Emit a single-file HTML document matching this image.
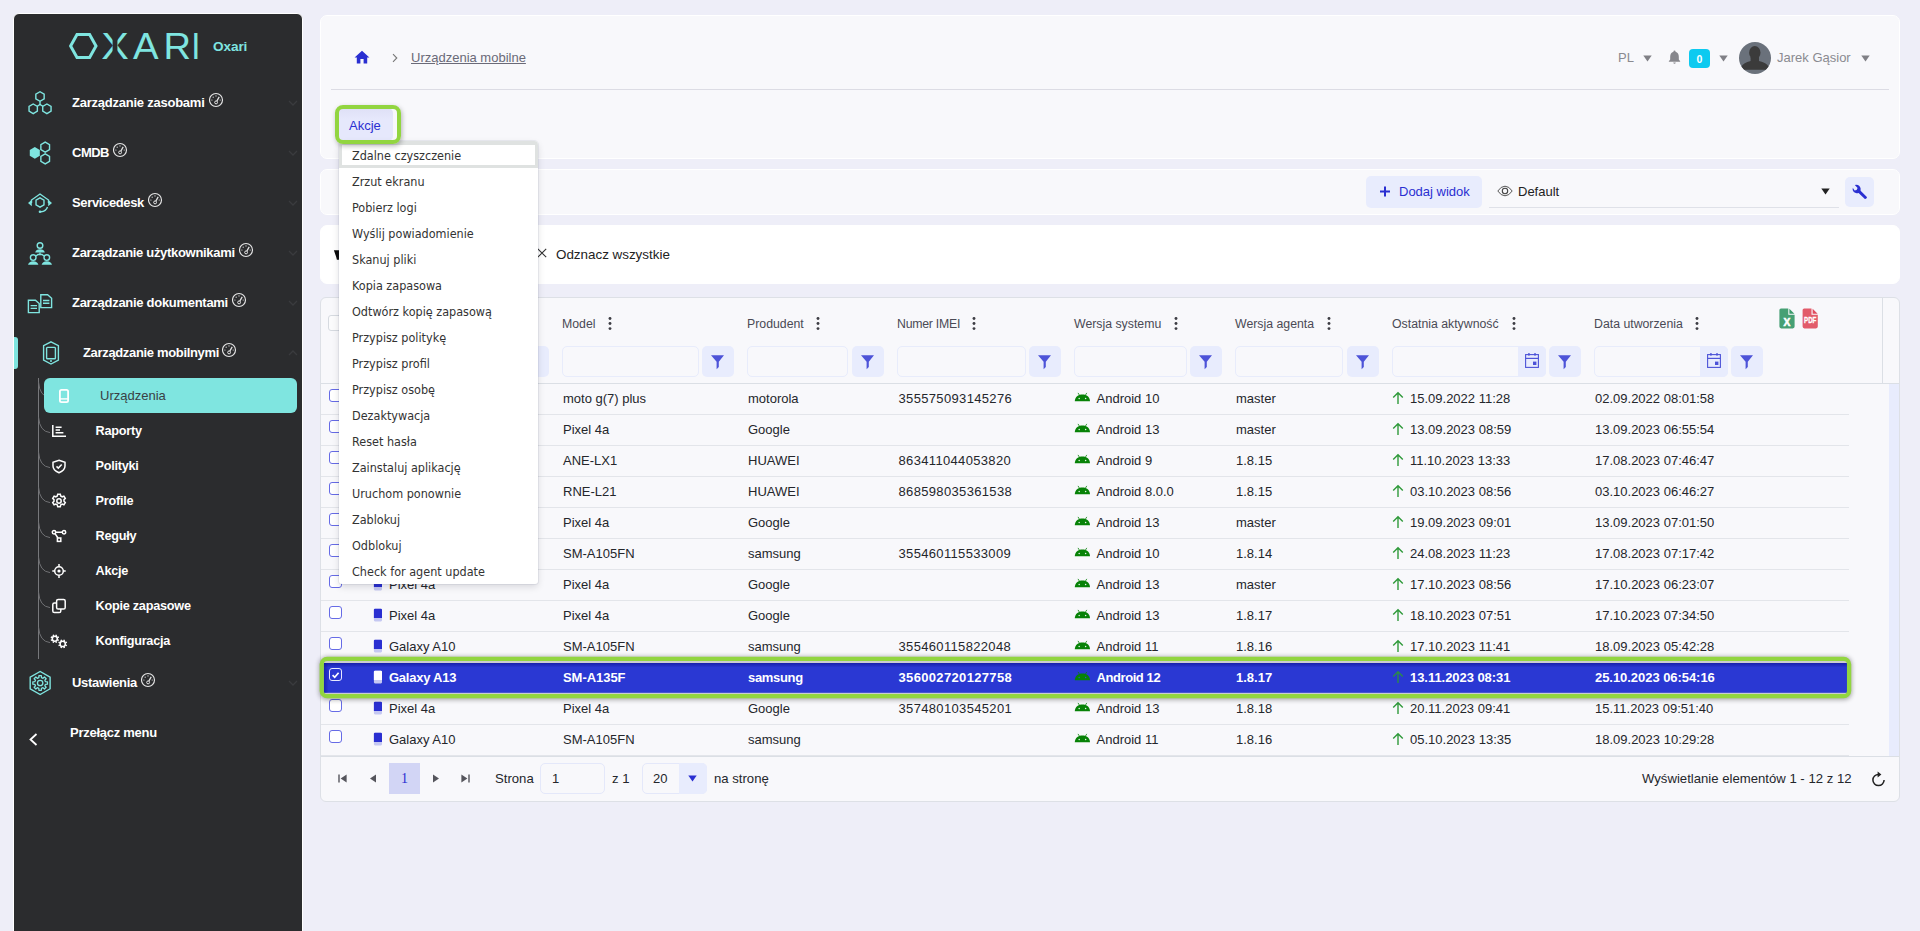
<!DOCTYPE html>
<html lang="pl"><head><meta charset="utf-8"><title>Urządzenia mobilne</title>
<style>
*{box-sizing:border-box;margin:0;padding:0}
html,body{width:1920px;height:931px;overflow:hidden}
body{background:#eeeef8;font-family:"Liberation Sans",Arial,sans-serif;font-size:13px;color:#2b2b33;position:relative}
.abs{position:absolute}
.t{position:absolute;white-space:nowrap;line-height:16px;margin-top:1px}
#side{position:absolute;left:13px;top:13px;width:290px;height:920px;background:#2b2c2e;border:1px solid #fff;border-radius:6px 6px 0 0}
.mi{margin-top:1px;position:absolute;white-space:nowrap;color:#fff;font-weight:700;font-size:13px;letter-spacing:-0.25px;line-height:16px}
.panel{position:absolute;left:320px;width:1580px;background:#f8f8fb;border-radius:7px;border:1px solid #fff}
.hdr{margin-top:1px;position:absolute;white-space:nowrap;font-size:12.3px;color:#4a4a55;line-height:14px;top:316px}
.fin{position:absolute;top:346px;height:31px;border:1px solid #e8ecfb;border-radius:5px;background:#f8f8fb}
.fbtn{position:absolute;top:346px;width:32px;height:31px;border-radius:5px;background:#e8ecfd}
.row{position:absolute;left:321px;width:1528px;height:31px;border-bottom:1px solid #e3e5ea}
.c{position:absolute;white-space:nowrap;font-size:13px;line-height:16px;top:7px;color:#24262b}
.cb{position:absolute;left:8px;top:5px;width:13px;height:13px;border:1px solid #666be6;border-radius:3px;background:#fff}
.dd{position:absolute;white-space:nowrap;left:352px;font-family:"DejaVu Sans Condensed","DejaVu Sans","Liberation Sans",sans-serif;font-size:12.5px;line-height:16px;color:#333;margin-top:1px}
</style></head>
<body>
<div id="side"></div>
<svg class="abs" style="left:66px;top:30px" width="140" height="32" viewBox="66 30 140 32" aria-label="OXARI">
<polygon points="70.6,46 77,34.5 89.6,34.5 96,46 89.6,57.5 77,57.5" fill="none" stroke="#7fe5e0" stroke-width="3"/>
<text y="59.3" font-family="Liberation Sans, Arial, sans-serif" font-size="36.6" fill="#7fe5e0"><tspan x="101.2" textLength="27.6" lengthAdjust="spacingAndGlyphs">X</tspan><tspan x="132.9" textLength="25.6" lengthAdjust="spacingAndGlyphs">A</tspan><tspan x="163.6" textLength="27.5" lengthAdjust="spacingAndGlyphs">R</tspan><tspan x="191.2" textLength="9.2" lengthAdjust="spacingAndGlyphs">I</tspan></text>
<rect x="112.6" y="32" width="4.8" height="28" fill="#2b2c2e"/>
</svg>
<div class="t" style="left:213px;top:38px;font-size:13.6px;font-weight:700;color:#7fe5e0;letter-spacing:-0.1px">Oxari</div>
<div class="mi" style="left:72px;top:94px;letter-spacing:-0.235px">Zarządzanie zasobami</div>
<svg class="abs" style="left:208.5px;top:92px" width="16" height="16" viewBox="0.7 0 16 16"><circle cx="7.7" cy="8" r="6.5" fill="none" stroke="#e6e6e6" stroke-width="1.15"/><circle cx="7.8" cy="10.4" r="1.45" fill="none" stroke="#e6e6e6" stroke-width="1"/><path d="M8.5 9.1 L10.9 4.9" stroke="#e6e6e6" stroke-width="1.25" fill="none"/><circle cx="3.6" cy="8" r=".6" fill="#e6e6e6"/><circle cx="4.9" cy="5.2" r=".6" fill="#e6e6e6"/><circle cx="7.7" cy="3.9" r=".6" fill="#e6e6e6"/><circle cx="11.9" cy="8" r=".6" fill="#e6e6e6"/></svg>
<svg class="abs" style="left:288px;top:100px" width="10" height="6" viewBox="0 0 10 6"><path d="M1 1 L5 5 L9 1" fill="none" stroke="#3a3b3e" stroke-width="1.3"/></svg>
<div class="mi" style="left:72px;top:144px;letter-spacing:-0.5px">CMDB</div>
<svg class="abs" style="left:112.5px;top:142px" width="16" height="16" viewBox="0.7 0 16 16"><circle cx="7.7" cy="8" r="6.5" fill="none" stroke="#e6e6e6" stroke-width="1.15"/><circle cx="7.8" cy="10.4" r="1.45" fill="none" stroke="#e6e6e6" stroke-width="1"/><path d="M8.5 9.1 L10.9 4.9" stroke="#e6e6e6" stroke-width="1.25" fill="none"/><circle cx="3.6" cy="8" r=".6" fill="#e6e6e6"/><circle cx="4.9" cy="5.2" r=".6" fill="#e6e6e6"/><circle cx="7.7" cy="3.9" r=".6" fill="#e6e6e6"/><circle cx="11.9" cy="8" r=".6" fill="#e6e6e6"/></svg>
<svg class="abs" style="left:288px;top:150px" width="10" height="6" viewBox="0 0 10 6"><path d="M1 1 L5 5 L9 1" fill="none" stroke="#3a3b3e" stroke-width="1.3"/></svg>
<div class="mi" style="left:72px;top:194px;letter-spacing:-0.355px">Servicedesk</div>
<svg class="abs" style="left:148px;top:192px" width="16" height="16" viewBox="0.7 0 16 16"><circle cx="7.7" cy="8" r="6.5" fill="none" stroke="#e6e6e6" stroke-width="1.15"/><circle cx="7.8" cy="10.4" r="1.45" fill="none" stroke="#e6e6e6" stroke-width="1"/><path d="M8.5 9.1 L10.9 4.9" stroke="#e6e6e6" stroke-width="1.25" fill="none"/><circle cx="3.6" cy="8" r=".6" fill="#e6e6e6"/><circle cx="4.9" cy="5.2" r=".6" fill="#e6e6e6"/><circle cx="7.7" cy="3.9" r=".6" fill="#e6e6e6"/><circle cx="11.9" cy="8" r=".6" fill="#e6e6e6"/></svg>
<svg class="abs" style="left:288px;top:200px" width="10" height="6" viewBox="0 0 10 6"><path d="M1 1 L5 5 L9 1" fill="none" stroke="#3a3b3e" stroke-width="1.3"/></svg>
<div class="mi" style="left:72px;top:244px;letter-spacing:-0.312px">Zarządzanie użytkownikami</div>
<svg class="abs" style="left:238.5px;top:242px" width="16" height="16" viewBox="0.7 0 16 16"><circle cx="7.7" cy="8" r="6.5" fill="none" stroke="#e6e6e6" stroke-width="1.15"/><circle cx="7.8" cy="10.4" r="1.45" fill="none" stroke="#e6e6e6" stroke-width="1"/><path d="M8.5 9.1 L10.9 4.9" stroke="#e6e6e6" stroke-width="1.25" fill="none"/><circle cx="3.6" cy="8" r=".6" fill="#e6e6e6"/><circle cx="4.9" cy="5.2" r=".6" fill="#e6e6e6"/><circle cx="7.7" cy="3.9" r=".6" fill="#e6e6e6"/><circle cx="11.9" cy="8" r=".6" fill="#e6e6e6"/></svg>
<svg class="abs" style="left:288px;top:250px" width="10" height="6" viewBox="0 0 10 6"><path d="M1 1 L5 5 L9 1" fill="none" stroke="#3a3b3e" stroke-width="1.3"/></svg>
<div class="mi" style="left:72px;top:294px;letter-spacing:-0.287px">Zarządzanie dokumentami</div>
<svg class="abs" style="left:232px;top:292px" width="16" height="16" viewBox="0.7 0 16 16"><circle cx="7.7" cy="8" r="6.5" fill="none" stroke="#e6e6e6" stroke-width="1.15"/><circle cx="7.8" cy="10.4" r="1.45" fill="none" stroke="#e6e6e6" stroke-width="1"/><path d="M8.5 9.1 L10.9 4.9" stroke="#e6e6e6" stroke-width="1.25" fill="none"/><circle cx="3.6" cy="8" r=".6" fill="#e6e6e6"/><circle cx="4.9" cy="5.2" r=".6" fill="#e6e6e6"/><circle cx="7.7" cy="3.9" r=".6" fill="#e6e6e6"/><circle cx="11.9" cy="8" r=".6" fill="#e6e6e6"/></svg>
<svg class="abs" style="left:288px;top:300px" width="10" height="6" viewBox="0 0 10 6"><path d="M1 1 L5 5 L9 1" fill="none" stroke="#3a3b3e" stroke-width="1.3"/></svg>
<div class="mi" style="left:83px;top:344px;letter-spacing:-0.338px">Zarządzanie mobilnymi</div>
<svg class="abs" style="left:222px;top:342px" width="16" height="16" viewBox="0.7 0 16 16"><circle cx="7.7" cy="8" r="6.5" fill="none" stroke="#e6e6e6" stroke-width="1.15"/><circle cx="7.8" cy="10.4" r="1.45" fill="none" stroke="#e6e6e6" stroke-width="1"/><path d="M8.5 9.1 L10.9 4.9" stroke="#e6e6e6" stroke-width="1.25" fill="none"/><circle cx="3.6" cy="8" r=".6" fill="#e6e6e6"/><circle cx="4.9" cy="5.2" r=".6" fill="#e6e6e6"/><circle cx="7.7" cy="3.9" r=".6" fill="#e6e6e6"/><circle cx="11.9" cy="8" r=".6" fill="#e6e6e6"/></svg>
<svg class="abs" style="left:288px;top:350px" width="10" height="6" viewBox="0 0 10 6"><path d="M1 5 L5 1 L9 5" fill="none" stroke="#3a3b3e" stroke-width="1.3"/></svg>
<div class="mi" style="left:72px;top:674px;letter-spacing:-0.29px">Ustawienia</div>
<svg class="abs" style="left:141px;top:672px" width="16" height="16" viewBox="0.7 0 16 16"><circle cx="7.7" cy="8" r="6.5" fill="none" stroke="#e6e6e6" stroke-width="1.15"/><circle cx="7.8" cy="10.4" r="1.45" fill="none" stroke="#e6e6e6" stroke-width="1"/><path d="M8.5 9.1 L10.9 4.9" stroke="#e6e6e6" stroke-width="1.25" fill="none"/><circle cx="3.6" cy="8" r=".6" fill="#e6e6e6"/><circle cx="4.9" cy="5.2" r=".6" fill="#e6e6e6"/><circle cx="7.7" cy="3.9" r=".6" fill="#e6e6e6"/><circle cx="11.9" cy="8" r=".6" fill="#e6e6e6"/></svg>
<svg class="abs" style="left:288px;top:680px" width="10" height="6" viewBox="0 0 10 6"><path d="M1 1 L5 5 L9 1" fill="none" stroke="#3a3b3e" stroke-width="1.3"/></svg>
<div class="mi" style="left:70px;top:724px;letter-spacing:-.27px">Przełącz menu</div>
<svg class="abs" style="left:29px;top:733px" width="9" height="13" viewBox="0 0 9 13"><path d="M7.5 1 L1.5 6.5 L7.5 12" fill="none" stroke="#fff" stroke-width="1.8"/></svg>
<div class="abs" style="left:14px;top:337px;width:4px;height:32px;background:#7fe5e0;border-radius:0 3px 3px 0"></div>
<svg class="abs" style="left:26px;top:89px" width="28" height="28" viewBox="26 89 28 28"><polygon points="44.16,98.90 40.00,101.30 35.84,98.90 35.84,94.10 40.00,91.70 44.16,94.10" fill="none" stroke="#7fe5e0" stroke-width="1.4"/><polygon points="37.36,111.20 33.20,113.60 29.04,111.20 29.04,106.40 33.20,104.00 37.36,106.40" fill="none" stroke="#7fe5e0" stroke-width="1.4"/><polygon points="51.06,111.20 46.90,113.60 42.74,111.20 42.74,106.40 46.90,104.00 51.06,106.40" fill="none" stroke="#7fe5e0" stroke-width="1.4"/><path d="M40 101.3 V104.5 M40 104.5 L37.4 106.2 M40 104.5 L42.7 106.2" fill="none" stroke="#7fe5e0" stroke-width="1.4"/></svg>
<svg class="abs" style="left:26px;top:139px" width="28" height="28" viewBox="26 139 28 28"><polygon points="39.82,155.80 34.80,158.70 29.78,155.80 29.78,150.00 34.80,147.10 39.82,150.00" fill="#7fe5e0"/><polygon points="49.53,149.60 45.20,152.10 40.87,149.60 40.87,144.60 45.20,142.10 49.53,144.60" fill="none" stroke="#7fe5e0" stroke-width="1.4"/><polygon points="49.53,161.40 45.20,163.90 40.87,161.40 40.87,156.40 45.20,153.90 49.53,156.40" fill="none" stroke="#7fe5e0" stroke-width="1.4"/></svg>
<svg class="abs" style="left:26px;top:190px" width="28" height="26" viewBox="26 190 28 26"><polygon points="43.98,204.80 40.00,207.10 36.02,204.80 36.02,200.20 40.00,197.90 43.98,200.20" fill="none" stroke="#7fe5e0" stroke-width="1.4"/><path d="M31.5 203 V200 L40 194 L48.5 200 V203" fill="none" stroke="#7fe5e0" stroke-width="1.4"/><path d="M31.8 199.8 L28 203 L31.8 206.2 Z M48.2 199.8 L52 203 L48.2 206.2 Z" fill="#7fe5e0"/><path d="M47.5 207 Q46 211.5 41 211.8" fill="none" stroke="#7fe5e0" stroke-width="1.4"/><circle cx="40" cy="211.8" r="1.3" fill="#7fe5e0"/></svg>
<svg class="abs" style="left:26px;top:240px" width="28" height="28" viewBox="26 240 28 28"><circle cx="40" cy="245.5" r="2.8" fill="none" stroke="#7fe5e0" stroke-width="1.4"/><path d="M35.2 252.5 Q36 249.2 40 249.2 Q44 249.2 44.8 252.5 Z" fill="#7fe5e0"/><circle cx="33.2" cy="257.6" r="2.8" fill="none" stroke="#7fe5e0" stroke-width="1.4"/><path d="M28 264.8 Q29 261.3 33.2 261.3 Q37.4 261.3 38.4 264.8 Z" fill="#7fe5e0"/><circle cx="46.8" cy="257.6" r="2.8" fill="none" stroke="#7fe5e0" stroke-width="1.4"/><path d="M41.6 264.8 Q42.6 261.3 46.8 261.3 Q51 261.3 52 264.8 Z" fill="#7fe5e0"/><path d="M40 252.5 V254.5 M36 256 L38 254.5 H42 L44 256" fill="none" stroke="#7fe5e0" stroke-width="1.4"/></svg>
<svg class="abs" style="left:26px;top:292px" width="28" height="24" viewBox="26 292 28 24"><path d="M40.8 294.8 H47.6 L51.6 298.2 V307.6 H40.8 Z" fill="none" stroke="#7fe5e0" stroke-width="1.4"/><path d="M43 300.5 H49.4 M43 303.3 H49.4" fill="none" stroke="#7fe5e0" stroke-width="1.4"/><path d="M28.4 300.2 H35.4 L39.2 303.6 V312.6 H28.4 Z" fill="none" stroke="#7fe5e0" stroke-width="1.4"/><path d="M30.6 305.6 H37 M30.6 308.4 H37" fill="none" stroke="#7fe5e0" stroke-width="1.4"/></svg>
<svg class="abs" style="left:41px;top:340px" width="20" height="26" viewBox="41 340 20 26"><path d="M51 341.8 L58.4 345.6 V360 L51 364 L43.6 360 V345.6 Z" fill="none" stroke="#7fe5e0" stroke-width="1.4"/><rect x="46.6" y="347.4" width="8.8" height="11.4" rx="0.8" fill="none" stroke="#7fe5e0" stroke-width="1.4"/><path d="M50 361 H52" fill="none" stroke="#7fe5e0" stroke-width="1.4"/></svg>
<svg class="abs" style="left:26px;top:668px" width="28" height="30" viewBox="26 668 28 30"><polygon points="50.11,688.75 40.15,694.50 30.19,688.75 30.19,677.25 40.15,671.50 50.11,677.25" fill="none" stroke="#7fe5e0" stroke-width="1.4"/><path d="M45.49 681.67 L47.45 681.79 L47.45 684.21 L45.49 684.33 L44.86 685.84 L46.17 687.30 L44.45 689.02 L42.99 687.71 L41.48 688.34 L41.36 690.30 L38.94 690.30 L38.82 688.34 L37.31 687.71 L35.85 689.02 L34.13 687.30 L35.44 685.84 L34.81 684.33 L32.85 684.21 L32.85 681.79 L34.81 681.67 L35.44 680.16 L34.13 678.70 L35.85 676.98 L37.31 678.29 L38.82 677.66 L38.94 675.70 L41.36 675.70 L41.48 677.66 L42.99 678.29 L44.45 676.98 L46.17 678.70 L44.86 680.16 Z" fill="none" stroke="#7fe5e0" stroke-width="1.3" stroke-linejoin="round"/><circle cx="40.15" cy="683" r="2.7" fill="none" stroke="#7fe5e0" stroke-width="1.3"/></svg>
<div class="abs" style="left:38px;top:378px;width:1px;height:281px;background:#77787b"></div>
<svg class="abs" style="left:38px;top:382px" width="13" height="17" viewBox="0 0 13 17"><path d="M0.5 0 Q1.5 14.5 12 15.6" fill="none" stroke="#707174" stroke-width="1"/></svg>
<svg class="abs" style="left:38px;top:417px" width="13" height="17" viewBox="0 0 13 17"><path d="M0.5 0 Q1.5 14.5 12 15.6" fill="none" stroke="#707174" stroke-width="1"/></svg>
<div class="mi" style="left:95.5px;top:422px;font-size:12.7px">Raporty</div>
<svg class="abs" style="left:38px;top:452px" width="13" height="17" viewBox="0 0 13 17"><path d="M0.5 0 Q1.5 14.5 12 15.6" fill="none" stroke="#707174" stroke-width="1"/></svg>
<div class="mi" style="left:95.5px;top:457px;font-size:12.7px">Polityki</div>
<svg class="abs" style="left:38px;top:487px" width="13" height="17" viewBox="0 0 13 17"><path d="M0.5 0 Q1.5 14.5 12 15.6" fill="none" stroke="#707174" stroke-width="1"/></svg>
<div class="mi" style="left:95.5px;top:492px;font-size:12.7px">Profile</div>
<svg class="abs" style="left:38px;top:522px" width="13" height="17" viewBox="0 0 13 17"><path d="M0.5 0 Q1.5 14.5 12 15.6" fill="none" stroke="#707174" stroke-width="1"/></svg>
<div class="mi" style="left:95.5px;top:527px;font-size:12.7px">Reguły</div>
<svg class="abs" style="left:38px;top:557px" width="13" height="17" viewBox="0 0 13 17"><path d="M0.5 0 Q1.5 14.5 12 15.6" fill="none" stroke="#707174" stroke-width="1"/></svg>
<div class="mi" style="left:95.5px;top:562px;font-size:12.7px">Akcje</div>
<svg class="abs" style="left:38px;top:592px" width="13" height="17" viewBox="0 0 13 17"><path d="M0.5 0 Q1.5 14.5 12 15.6" fill="none" stroke="#707174" stroke-width="1"/></svg>
<div class="mi" style="left:95.5px;top:597px;font-size:12.7px">Kopie zapasowe</div>
<svg class="abs" style="left:38px;top:627px" width="13" height="17" viewBox="0 0 13 17"><path d="M0.5 0 Q1.5 14.5 12 15.6" fill="none" stroke="#707174" stroke-width="1"/></svg>
<div class="mi" style="left:95.5px;top:632px;font-size:12.7px">Konfiguracja</div>
<div class="abs" style="left:44px;top:378px;width:253px;height:35px;background:#7fe5e0;border-radius:6px"></div>
<div class="t" style="left:100px;top:387px;font-size:13px;color:#3a3f45">Urządzenia</div>
<svg class="abs" style="left:59px;top:389px" width="10" height="14" viewBox="0 0 10 14"><rect x="0.9" y="0.9" width="8.2" height="12.2" rx="1.6" fill="none" stroke="#fff" stroke-width="1.8"/><rect x="1" y="9.2" width="8" height="1.4" fill="#fff"/></svg>
<svg class="abs" style="left:51px;top:424px" width="16" height="14" viewBox="0 0 16 14"><path d="M1.8 1 V12.2 H15" fill="none" stroke="#fff" stroke-width="1.5" stroke-width="1.8"/><path d="M4.6 3.2 H10.6 M4.6 6 H9 M4.6 8.8 H12.4" fill="none" stroke="#fff" stroke-width="1.5"/></svg>
<svg class="abs" style="left:51px;top:457px" width="16" height="17" viewBox="0 0 16 17"><path d="M8 3.2 L14 5.2 V9 Q14 13.2 8 15.8 Q2 13.2 2 9 V5.2 Z" fill="none" stroke="#fff" stroke-width="1.5"/><path d="M5.5 9.4 L7.3 11.1 L10.7 7.6" fill="none" stroke="#fff" stroke-width="1.5"/></svg>
<svg class="abs" style="left:51px;top:493px" width="16" height="16" viewBox="0 0 16 16"><circle cx="8" cy="8" r="2.2" fill="none" stroke="#fff" stroke-width="1.5"/><path d="M6.7 1.2 h2.6 l.4 1.8 l1.5 .8 l1.7 -.7 l1.4 2.2 l-1.3 1.3 v1.7 l1.3 1.3 l-1.4 2.2 l-1.7 -.7 l-1.5 .8 l-.4 1.8 h-2.6 l-.4 -1.8 l-1.5 -.8 l-1.7 .7 l-1.4 -2.2 l1.3 -1.3 v-1.7 l-1.3 -1.3 l1.4 -2.2 l1.7 .7 l1.5 -.8 Z" fill="none" stroke="#fff" stroke-width="1.5"/></svg>
<svg class="abs" style="left:51px;top:529px" width="16" height="14" viewBox="0 0 16 14"><circle cx="3" cy="3.2" r="1.7" fill="none" stroke="#fff" stroke-width="1.5"/><circle cx="13" cy="3.2" r="1.7" fill="none" stroke="#fff" stroke-width="1.5"/><rect x="6.4" y="9" width="3.4" height="3.4" fill="none" stroke="#fff" stroke-width="1.5"/><path d="M4.7 3.2 H11.3 M4 4.6 L7 9" fill="none" stroke="#fff" stroke-width="1.5"/></svg>
<svg class="abs" style="left:51px;top:563px" width="16" height="16" viewBox="0 0 16 16"><circle cx="8" cy="8" r="4.3" fill="none" stroke="#fff" stroke-width="1.5"/><circle cx="8" cy="8" r="1.6" fill="#fff"/><path d="M8 0.9 V3.4 M8 12.6 V15.1 M1.3 8 H3.6 M12.4 8 H14.7" fill="none" stroke="#fff" stroke-width="1.5"/></svg>
<svg class="abs" style="left:51px;top:598px" width="16" height="16" viewBox="0 0 16 16"><rect x="5.6" y="1.4" width="8.6" height="9.6" rx="1.6" fill="none" stroke="#fff" stroke-width="1.5"/><path d="M5.6 5 H3.4 Q1.8 5 1.8 6.6 V13 Q1.8 14.6 3.4 14.6 H8.2 Q9.8 14.6 9.8 13 V11" fill="none" stroke="#fff" stroke-width="1.5"/></svg>
<svg class="abs" style="left:48px;top:632px" width="20" height="18" viewBox="48 632 20 18"><circle cx="54.8" cy="638.7" r="2.5" fill="none" stroke="#fff" stroke-width="1.5"/><path d="M57.57 639.85 L58.77 640.35 M55.95 641.47 L56.45 642.67 M53.65 641.47 L53.15 642.67 M52.03 639.85 L50.83 640.35 M52.03 637.55 L50.83 637.05 M53.65 635.93 L53.15 634.73 M55.95 635.93 L56.45 634.73 M57.57 637.55 L58.77 637.05 " stroke="#fff" stroke-width="1.5" fill="none"/><circle cx="62.7" cy="643.9" r="2.6" fill="none" stroke="#fff" stroke-width="1.5"/><path d="M65.56 645.09 L66.86 645.62 M63.89 646.76 L64.42 648.06 M61.51 646.76 L60.98 648.06 M59.84 645.09 L58.54 645.62 M59.84 642.71 L58.54 642.18 M61.51 641.04 L60.98 639.74 M63.89 641.04 L64.42 639.74 M65.56 642.71 L66.86 642.18 " stroke="#fff" stroke-width="1.5" fill="none"/></svg>
<div class="panel" style="top:15px;height:144px"></div>
<div class="abs" style="left:331px;top:89px;width:1558px;height:1px;background:#dcdce4"></div>
<svg class="abs" style="left:354px;top:50px" width="16" height="14" viewBox="0 0 16 14"><path d="M8 0.8 L15.4 7.4 H13.2 V13.4 H9.6 V9 H6.4 V13.4 H2.8 V7.4 H0.6 Z" fill="#2a2fd1"/></svg>
<svg class="abs" style="left:392px;top:53px" width="6" height="10" viewBox="0 0 6 10"><path d="M1 1.2 L4.8 5 L1 8.8" fill="none" stroke="#777" stroke-width="1.1"/></svg>
<div class="t" style="left:411px;top:49px;font-size:13px;color:#6a6a78;text-decoration:underline;letter-spacing:0px">Urządzenia mobilne</div>
<div class="t" style="left:1618px;top:49px;font-size:13px;color:#8a8a90">PL</div>
<svg class="abs" style="left:1643px;top:55px" width="9" height="7" viewBox="0 0 9 7"><path d="M0.3 0.5 H8.7 L4.5 6.5 Z" fill="#808086"/></svg>
<svg class="abs" style="left:1668px;top:50px" width="13" height="14.4" viewBox="0 0 13 15"><path d="M6.5 0.6 Q7.6 0.6 7.6 1.8 Q11 2.8 11 7 V10 L12.4 11.6 V12.2 H0.6 V11.6 L2 10 V7 Q2 2.8 5.4 1.8 Q5.4 0.6 6.5 0.6 Z" fill="#86868c"/><path d="M5.2 13 H7.8 Q7.6 14.4 6.5 14.4 Q5.4 14.4 5.2 13 Z" fill="#86868c"/></svg>
<div class="abs" style="left:1689px;top:49px;width:21px;height:19px;background:#0dcaf0;border-radius:4px;color:#fff;font-size:10.5px;font-weight:700;text-align:center;line-height:20px">0</div>
<svg class="abs" style="left:1719px;top:55px" width="9" height="7" viewBox="0 0 9 7"><path d="M0.3 0.5 H8.7 L4.5 6.5 Z" fill="#808086"/></svg>
<svg class="abs" style="left:1739px;top:42px" width="32" height="32" viewBox="0 0 32 32"><defs><clipPath id="av"><circle cx="16" cy="16" r="16"/></clipPath></defs><circle cx="16" cy="16" r="16" fill="#6a717b"/><g clip-path="url(#av)" fill="#3b3b3b"><ellipse cx="15.8" cy="10.8" rx="5.7" ry="6.7"/><path d="M11.6 15 H20 V19 Q27.5 20.8 29.6 24.6 L27.4 27.8 H4.6 L2.4 24.6 Q4.5 20.8 11.6 19 Z"/></g></svg>
<div class="t" style="left:1777px;top:49px;font-size:13px;color:#8a8a90">Jarek Gąsior</div>
<svg class="abs" style="left:1861px;top:55px" width="9" height="7" viewBox="0 0 9 7"><path d="M0.3 0.5 H8.7 L4.5 6.5 Z" fill="#808086"/></svg>
<div class="abs" style="left:338px;top:108px;width:55px;height:33px;border-radius:5px;background:linear-gradient(#dfe0f6,#e6e8fc 35%,#e6e8fc)"></div>
<div class="t" style="left:349px;top:117px;font-size:13px;color:#2a2fd1">Akcje</div>
<div class="panel" style="top:169px;height:46px"></div>
<div class="abs" style="left:1366px;top:176px;width:116px;height:32px;background:#e8ecfd;border-radius:5px"></div>
<svg class="abs" style="left:1379px;top:186px" width="12" height="11" viewBox="0 0 12 11"><path d="M6 0.5 V10.5 M1 5.5 H11" stroke="#2a2fd1" stroke-width="2" fill="none"/></svg>
<div class="t" style="left:1399px;top:183px;font-size:13px;color:#2a2fd1">Dodaj widok</div>
<div class="abs" style="left:1489px;top:207px;width:350px;height:1px;background:#dfe1e8"></div>
<svg class="abs" style="left:1497px;top:185px" width="16" height="12" viewBox="0 0 16 12"><path d="M0.8 6 Q4 1.2 8 1.2 Q12 1.2 15.2 6 Q12 10.8 8 10.8 Q4 10.8 0.8 6 Z" fill="none" stroke="#555" stroke-width="1"/><circle cx="8" cy="6" r="2.7" fill="none" stroke="#444" stroke-width="1.1"/></svg>
<div class="t" style="left:1518px;top:183px;font-size:13px;color:#222">Default</div>
<svg class="abs" style="left:1821px;top:188px" width="9" height="7" viewBox="0 0 9 7"><path d="M0.3 0.5 H8.7 L4.5 6.5 Z" fill="#222"/></svg>
<div class="abs" style="left:1845px;top:177px;width:29px;height:30px;background:#e8ecfd;border-radius:5px"></div>
<svg class="abs" style="left:1852px;top:184px" width="16" height="16" viewBox="0 0 16 16"><path d="M14.6 13.2 L8.6 7.2 Q9.3 4.6 7.4 2.6 Q5.4 0.8 2.8 1.6 L5.6 4.4 L4.6 6.4 L2.6 7 L0.8 4.2 Q0 6.6 1.8 8.6 Q3.8 10.4 6.6 9.4 L12.6 15.2 Q13.4 15.8 14.2 15 L14.8 14.4 Q15.2 13.8 14.6 13.2 Z" fill="#2a2fd1" transform="translate(0,-0.5)"/></svg>
<div class="panel" style="top:225px;height:59px;background:#fff"></div>
<svg class="abs" style="left:333px;top:249px" width="8" height="12" viewBox="333 249 8 12"><path d="M333.9 250.2 H339 V259.8 H336.9 L336.2 257 Z" fill="#0c0c0c"/></svg>
<svg class="abs" style="left:537px;top:248px" width="10" height="10" viewBox="0 0 10 10"><path d="M0.8 0.8 L9.2 9.2 M9.2 0.8 L0.8 9.2" stroke="#333" stroke-width="1.1" fill="none"/></svg>
<div class="t" style="left:556px;top:246px;font-size:13.4px;color:#222">Odznacz wszystkie</div>
<div class="panel" style="top:297px;height:505px;border:1px solid #dde0e6;border-radius:6px"></div>
<div class="abs" style="left:321px;top:383px;width:1578px;height:1px;background:#dbdfe5"></div>
<div class="abs" style="left:1882px;top:298px;width:1px;height:85px;background:#dbdfe5"></div>
<div class="abs" style="left:1889px;top:384px;width:10px;height:372px;background:#e8ecfd"></div>
<div class="abs" style="left:321px;top:756px;width:1578px;height:1px;background:#dbdfe5"></div>
<div class="abs" style="left:328px;top:315px;width:16px;height:16px;border:1px solid #d6dae0;border-radius:3px;background:#fbfbfc"></div>
<div class="fbtn" style="left:517px"></div>
<div class="hdr" style="left:562px">Model</div>
<svg class="abs" style="left:608px;top:317px" width="4" height="14" viewBox="0 0 4 14"><circle cx="2" cy="1.5" r="1.45" fill="#3d3d44"/><circle cx="2" cy="6.55" r="1.45" fill="#3d3d44"/><circle cx="2" cy="11.6" r="1.45" fill="#3d3d44"/></svg>
<div class="fin" style="left:562px;width:137px"></div>
<div class="fbtn" style="left:702px"></div>
<svg class="abs" style="left:710px;top:355px" width="15" height="15" viewBox="0 0 15 15"><path d="M1 0.2 H14 L8.8 6.8 V12 L6.6 14.2 V6.8 Z" fill="#4d53d8"/></svg>
<div class="hdr" style="left:747px">Produdent</div>
<svg class="abs" style="left:816px;top:317px" width="4" height="14" viewBox="0 0 4 14"><circle cx="2" cy="1.5" r="1.45" fill="#3d3d44"/><circle cx="2" cy="6.55" r="1.45" fill="#3d3d44"/><circle cx="2" cy="11.6" r="1.45" fill="#3d3d44"/></svg>
<div class="fin" style="left:747px;width:101px"></div>
<div class="fbtn" style="left:852px"></div>
<svg class="abs" style="left:860px;top:355px" width="15" height="15" viewBox="0 0 15 15"><path d="M1 0.2 H14 L8.8 6.8 V12 L6.6 14.2 V6.8 Z" fill="#4d53d8"/></svg>
<div class="hdr" style="left:897px"><span style="letter-spacing:-.25px">Numer IMEI</span></div>
<svg class="abs" style="left:972px;top:317px" width="4" height="14" viewBox="0 0 4 14"><circle cx="2" cy="1.5" r="1.45" fill="#3d3d44"/><circle cx="2" cy="6.55" r="1.45" fill="#3d3d44"/><circle cx="2" cy="11.6" r="1.45" fill="#3d3d44"/></svg>
<div class="fin" style="left:897px;width:129px"></div>
<div class="fbtn" style="left:1029px"></div>
<svg class="abs" style="left:1037px;top:355px" width="15" height="15" viewBox="0 0 15 15"><path d="M1 0.2 H14 L8.8 6.8 V12 L6.6 14.2 V6.8 Z" fill="#4d53d8"/></svg>
<div class="hdr" style="left:1074px">Wersja systemu</div>
<svg class="abs" style="left:1174px;top:317px" width="4" height="14" viewBox="0 0 4 14"><circle cx="2" cy="1.5" r="1.45" fill="#3d3d44"/><circle cx="2" cy="6.55" r="1.45" fill="#3d3d44"/><circle cx="2" cy="11.6" r="1.45" fill="#3d3d44"/></svg>
<div class="fin" style="left:1074px;width:113px"></div>
<div class="fbtn" style="left:1190px"></div>
<svg class="abs" style="left:1198px;top:355px" width="15" height="15" viewBox="0 0 15 15"><path d="M1 0.2 H14 L8.8 6.8 V12 L6.6 14.2 V6.8 Z" fill="#4d53d8"/></svg>
<div class="hdr" style="left:1235px">Wersja agenta</div>
<svg class="abs" style="left:1327px;top:317px" width="4" height="14" viewBox="0 0 4 14"><circle cx="2" cy="1.5" r="1.45" fill="#3d3d44"/><circle cx="2" cy="6.55" r="1.45" fill="#3d3d44"/><circle cx="2" cy="11.6" r="1.45" fill="#3d3d44"/></svg>
<div class="fin" style="left:1235px;width:108px"></div>
<div class="fbtn" style="left:1347px"></div>
<svg class="abs" style="left:1355px;top:355px" width="15" height="15" viewBox="0 0 15 15"><path d="M1 0.2 H14 L8.8 6.8 V12 L6.6 14.2 V6.8 Z" fill="#4d53d8"/></svg>
<div class="hdr" style="left:1392px">Ostatnia aktywność</div>
<svg class="abs" style="left:1512px;top:317px" width="4" height="14" viewBox="0 0 4 14"><circle cx="2" cy="1.5" r="1.45" fill="#3d3d44"/><circle cx="2" cy="6.55" r="1.45" fill="#3d3d44"/><circle cx="2" cy="11.6" r="1.45" fill="#3d3d44"/></svg>
<div class="fin" style="left:1392px;width:154px"></div>
<div class="abs" style="left:1518px;top:346px;width:28px;height:31px;background:#e8ecfd;border-radius:0 5px 5px 0"></div>
<svg class="abs" style="left:1525px;top:353px" width="14" height="15" viewBox="0 0 14 15"><rect x="0.6" y="1.6" width="12.8" height="12.8" fill="none" stroke="#4d53d8" stroke-width="1.1"/><path d="M0.6 5.4 H13.4" stroke="#4d53d8" stroke-width="1.2" fill="none"/><path d="M3.9 0.2 V2.6 M10 0.2 V2.6" stroke="#4d53d8" stroke-width="1.8" fill="none"/><rect x="8" y="8.6" width="3.4" height="3.4" fill="#4d53d8"/></svg>
<div class="fbtn" style="left:1549px"></div>
<svg class="abs" style="left:1557px;top:355px" width="15" height="15" viewBox="0 0 15 15"><path d="M1 0.2 H14 L8.8 6.8 V12 L6.6 14.2 V6.8 Z" fill="#4d53d8"/></svg>
<div class="hdr" style="left:1594px">Data utworzenia</div>
<svg class="abs" style="left:1695px;top:317px" width="4" height="14" viewBox="0 0 4 14"><circle cx="2" cy="1.5" r="1.45" fill="#3d3d44"/><circle cx="2" cy="6.55" r="1.45" fill="#3d3d44"/><circle cx="2" cy="11.6" r="1.45" fill="#3d3d44"/></svg>
<div class="fin" style="left:1594px;width:134px"></div>
<div class="abs" style="left:1700px;top:346px;width:28px;height:31px;background:#e8ecfd;border-radius:0 5px 5px 0"></div>
<svg class="abs" style="left:1707px;top:353px" width="14" height="15" viewBox="0 0 14 15"><rect x="0.6" y="1.6" width="12.8" height="12.8" fill="none" stroke="#4d53d8" stroke-width="1.1"/><path d="M0.6 5.4 H13.4" stroke="#4d53d8" stroke-width="1.2" fill="none"/><path d="M3.9 0.2 V2.6 M10 0.2 V2.6" stroke="#4d53d8" stroke-width="1.8" fill="none"/><rect x="8" y="8.6" width="3.4" height="3.4" fill="#4d53d8"/></svg>
<div class="fbtn" style="left:1731px"></div>
<svg class="abs" style="left:1739px;top:355px" width="15" height="15" viewBox="0 0 15 15"><path d="M1 0.2 H14 L8.8 6.8 V12 L6.6 14.2 V6.8 Z" fill="#4d53d8"/></svg>
<svg class="abs" style="left:1775px;top:304px" width="48" height="28" viewBox="1775 304 48 28"><path d="M1781.0 308.5 H1788.3 V314.7 H1794.6 V326.6 Q1794.6 328.4 1792.8 328.4 H1781.2 Q1779.4 328.4 1779.4 326.6 V310.1 Q1779.4 308.5 1781.0 308.5 Z" fill="#46a074"/><path d="M1789.4 308.8 L1794.4 313.7 H1789.4 Z" fill="#3c9a6c"/><path d="M1804.2 308.5 H1811.5 V314.7 H1817.8 V326.6 Q1817.8 328.4 1816.0 328.4 H1804.4 Q1802.6 328.4 1802.6 326.6 V310.1 Q1802.6 308.5 1804.2 308.5 Z" fill="#e25b6a"/><path d="M1812.6 308.8 L1817.6 313.7 H1812.6 Z" fill="#e04c5e"/><text transform="translate(1787,326) scale(0.92,1)" text-anchor="middle" font-family="Liberation Sans, Arial, sans-serif" font-weight="700" font-size="11.2" fill="#fff" stroke="#fff" stroke-width=".6">X</text><text x="1810.2" y="323.1" text-anchor="middle" font-family="Liberation Sans, Arial, sans-serif" font-weight="700" font-size="8.3" fill="#fff" stroke="#fff" stroke-width=".3" textLength="12.4" lengthAdjust="spacingAndGlyphs">PDF</text></svg>
<div class="row" style="top:384px"><div class="cb"></div><svg class="abs" style="left:52px;top:7px" width="10" height="14" viewBox="0 0 10 14"><rect x="0.9" y="0.7" width="8.1" height="12.7" rx="1.1" fill="#c5c8f2"/><path d="M0.9 1.8 Q0.9 0.7 2 0.7 H7.9 Q9 0.7 9 1.8 V9.9 H0.9 Z" fill="#2a2fd1"/></svg><div class="c" style="left:68px"></div><div class="c" style="left:242px">moto g(7) plus</div><div class="c" style="left:427px">motorola</div><div class="c" style="left:577.5px;letter-spacing:.34px">355575093145276</div><svg class="abs" style="left:752px;top:8px" width="19" height="11" viewBox="0 0 19 11"><path d="M1.8 9.2 C1.9 4.8 5 2.4 9.4 2.4 C13.8 2.4 16.9 4.8 17 9.2 Z" fill="#078207"/><path d="M5 0.9 L6.7 3.6 M13.8 0.9 L12.1 3.6" stroke="#078207" stroke-width="0.8" fill="none"/><circle cx="6.2" cy="6.5" r=".75" fill="#e4f2e8"/><circle cx="12.6" cy="6.5" r=".75" fill="#e4f2e8"/></svg><div class="c" style="left:775.5px">Android 10</div><div class="c" style="left:915px">master</div><svg class="abs" style="left:1071px;top:7px" width="12" height="13" viewBox="0 0 12 13"><path d="M6 12.9 V1.9 M1.2 6.6 L6 1.8 L10.8 6.6" fill="none" stroke="#2f9a3a" stroke-width="1.4"/></svg><div class="c" style="left:1089px">15.09.2022 11:28</div><div class="c" style="left:1274px">02.09.2022 08:01:58</div></div>
<div class="row" style="top:415px"><div class="cb"></div><svg class="abs" style="left:52px;top:7px" width="10" height="14" viewBox="0 0 10 14"><rect x="0.9" y="0.7" width="8.1" height="12.7" rx="1.1" fill="#c5c8f2"/><path d="M0.9 1.8 Q0.9 0.7 2 0.7 H7.9 Q9 0.7 9 1.8 V9.9 H0.9 Z" fill="#2a2fd1"/></svg><div class="c" style="left:68px"></div><div class="c" style="left:242px">Pixel 4a</div><div class="c" style="left:427px">Google</div><div class="c" style="left:577.5px;letter-spacing:.34px"></div><svg class="abs" style="left:752px;top:8px" width="19" height="11" viewBox="0 0 19 11"><path d="M1.8 9.2 C1.9 4.8 5 2.4 9.4 2.4 C13.8 2.4 16.9 4.8 17 9.2 Z" fill="#078207"/><path d="M5 0.9 L6.7 3.6 M13.8 0.9 L12.1 3.6" stroke="#078207" stroke-width="0.8" fill="none"/><circle cx="6.2" cy="6.5" r=".75" fill="#e4f2e8"/><circle cx="12.6" cy="6.5" r=".75" fill="#e4f2e8"/></svg><div class="c" style="left:775.5px">Android 13</div><div class="c" style="left:915px">master</div><svg class="abs" style="left:1071px;top:7px" width="12" height="13" viewBox="0 0 12 13"><path d="M6 12.9 V1.9 M1.2 6.6 L6 1.8 L10.8 6.6" fill="none" stroke="#2f9a3a" stroke-width="1.4"/></svg><div class="c" style="left:1089px">13.09.2023 08:59</div><div class="c" style="left:1274px">13.09.2023 06:55:54</div></div>
<div class="row" style="top:446px"><div class="cb"></div><svg class="abs" style="left:52px;top:7px" width="10" height="14" viewBox="0 0 10 14"><rect x="0.9" y="0.7" width="8.1" height="12.7" rx="1.1" fill="#c5c8f2"/><path d="M0.9 1.8 Q0.9 0.7 2 0.7 H7.9 Q9 0.7 9 1.8 V9.9 H0.9 Z" fill="#2a2fd1"/></svg><div class="c" style="left:68px"></div><div class="c" style="left:242px">ANE-LX1</div><div class="c" style="left:427px">HUAWEI</div><div class="c" style="left:577.5px;letter-spacing:.34px">863411044053820</div><svg class="abs" style="left:752px;top:8px" width="19" height="11" viewBox="0 0 19 11"><path d="M1.8 9.2 C1.9 4.8 5 2.4 9.4 2.4 C13.8 2.4 16.9 4.8 17 9.2 Z" fill="#078207"/><path d="M5 0.9 L6.7 3.6 M13.8 0.9 L12.1 3.6" stroke="#078207" stroke-width="0.8" fill="none"/><circle cx="6.2" cy="6.5" r=".75" fill="#e4f2e8"/><circle cx="12.6" cy="6.5" r=".75" fill="#e4f2e8"/></svg><div class="c" style="left:775.5px">Android 9</div><div class="c" style="left:915px">1.8.15</div><svg class="abs" style="left:1071px;top:7px" width="12" height="13" viewBox="0 0 12 13"><path d="M6 12.9 V1.9 M1.2 6.6 L6 1.8 L10.8 6.6" fill="none" stroke="#2f9a3a" stroke-width="1.4"/></svg><div class="c" style="left:1089px">11.10.2023 13:33</div><div class="c" style="left:1274px">17.08.2023 07:46:47</div></div>
<div class="row" style="top:477px"><div class="cb"></div><svg class="abs" style="left:52px;top:7px" width="10" height="14" viewBox="0 0 10 14"><rect x="0.9" y="0.7" width="8.1" height="12.7" rx="1.1" fill="#c5c8f2"/><path d="M0.9 1.8 Q0.9 0.7 2 0.7 H7.9 Q9 0.7 9 1.8 V9.9 H0.9 Z" fill="#2a2fd1"/></svg><div class="c" style="left:68px"></div><div class="c" style="left:242px">RNE-L21</div><div class="c" style="left:427px">HUAWEI</div><div class="c" style="left:577.5px;letter-spacing:.34px">868598035361538</div><svg class="abs" style="left:752px;top:8px" width="19" height="11" viewBox="0 0 19 11"><path d="M1.8 9.2 C1.9 4.8 5 2.4 9.4 2.4 C13.8 2.4 16.9 4.8 17 9.2 Z" fill="#078207"/><path d="M5 0.9 L6.7 3.6 M13.8 0.9 L12.1 3.6" stroke="#078207" stroke-width="0.8" fill="none"/><circle cx="6.2" cy="6.5" r=".75" fill="#e4f2e8"/><circle cx="12.6" cy="6.5" r=".75" fill="#e4f2e8"/></svg><div class="c" style="left:775.5px">Android 8.0.0</div><div class="c" style="left:915px">1.8.15</div><svg class="abs" style="left:1071px;top:7px" width="12" height="13" viewBox="0 0 12 13"><path d="M6 12.9 V1.9 M1.2 6.6 L6 1.8 L10.8 6.6" fill="none" stroke="#2f9a3a" stroke-width="1.4"/></svg><div class="c" style="left:1089px">03.10.2023 08:56</div><div class="c" style="left:1274px">03.10.2023 06:46:27</div></div>
<div class="row" style="top:508px"><div class="cb"></div><svg class="abs" style="left:52px;top:7px" width="10" height="14" viewBox="0 0 10 14"><rect x="0.9" y="0.7" width="8.1" height="12.7" rx="1.1" fill="#c5c8f2"/><path d="M0.9 1.8 Q0.9 0.7 2 0.7 H7.9 Q9 0.7 9 1.8 V9.9 H0.9 Z" fill="#2a2fd1"/></svg><div class="c" style="left:68px"></div><div class="c" style="left:242px">Pixel 4a</div><div class="c" style="left:427px">Google</div><div class="c" style="left:577.5px;letter-spacing:.34px"></div><svg class="abs" style="left:752px;top:8px" width="19" height="11" viewBox="0 0 19 11"><path d="M1.8 9.2 C1.9 4.8 5 2.4 9.4 2.4 C13.8 2.4 16.9 4.8 17 9.2 Z" fill="#078207"/><path d="M5 0.9 L6.7 3.6 M13.8 0.9 L12.1 3.6" stroke="#078207" stroke-width="0.8" fill="none"/><circle cx="6.2" cy="6.5" r=".75" fill="#e4f2e8"/><circle cx="12.6" cy="6.5" r=".75" fill="#e4f2e8"/></svg><div class="c" style="left:775.5px">Android 13</div><div class="c" style="left:915px">master</div><svg class="abs" style="left:1071px;top:7px" width="12" height="13" viewBox="0 0 12 13"><path d="M6 12.9 V1.9 M1.2 6.6 L6 1.8 L10.8 6.6" fill="none" stroke="#2f9a3a" stroke-width="1.4"/></svg><div class="c" style="left:1089px">19.09.2023 09:01</div><div class="c" style="left:1274px">13.09.2023 07:01:50</div></div>
<div class="row" style="top:539px"><div class="cb"></div><svg class="abs" style="left:52px;top:7px" width="10" height="14" viewBox="0 0 10 14"><rect x="0.9" y="0.7" width="8.1" height="12.7" rx="1.1" fill="#c5c8f2"/><path d="M0.9 1.8 Q0.9 0.7 2 0.7 H7.9 Q9 0.7 9 1.8 V9.9 H0.9 Z" fill="#2a2fd1"/></svg><div class="c" style="left:68px"></div><div class="c" style="left:242px">SM-A105FN</div><div class="c" style="left:427px">samsung</div><div class="c" style="left:577.5px;letter-spacing:.34px">355460115533009</div><svg class="abs" style="left:752px;top:8px" width="19" height="11" viewBox="0 0 19 11"><path d="M1.8 9.2 C1.9 4.8 5 2.4 9.4 2.4 C13.8 2.4 16.9 4.8 17 9.2 Z" fill="#078207"/><path d="M5 0.9 L6.7 3.6 M13.8 0.9 L12.1 3.6" stroke="#078207" stroke-width="0.8" fill="none"/><circle cx="6.2" cy="6.5" r=".75" fill="#e4f2e8"/><circle cx="12.6" cy="6.5" r=".75" fill="#e4f2e8"/></svg><div class="c" style="left:775.5px">Android 10</div><div class="c" style="left:915px">1.8.14</div><svg class="abs" style="left:1071px;top:7px" width="12" height="13" viewBox="0 0 12 13"><path d="M6 12.9 V1.9 M1.2 6.6 L6 1.8 L10.8 6.6" fill="none" stroke="#2f9a3a" stroke-width="1.4"/></svg><div class="c" style="left:1089px">24.08.2023 11:23</div><div class="c" style="left:1274px">17.08.2023 07:17:42</div></div>
<div class="row" style="top:570px"><div class="cb"></div><svg class="abs" style="left:52px;top:7px" width="10" height="14" viewBox="0 0 10 14"><rect x="0.9" y="0.7" width="8.1" height="12.7" rx="1.1" fill="#c5c8f2"/><path d="M0.9 1.8 Q0.9 0.7 2 0.7 H7.9 Q9 0.7 9 1.8 V9.9 H0.9 Z" fill="#2a2fd1"/></svg><div class="c" style="left:68px">Pixel 4a</div><div class="c" style="left:242px">Pixel 4a</div><div class="c" style="left:427px">Google</div><div class="c" style="left:577.5px;letter-spacing:.34px"></div><svg class="abs" style="left:752px;top:8px" width="19" height="11" viewBox="0 0 19 11"><path d="M1.8 9.2 C1.9 4.8 5 2.4 9.4 2.4 C13.8 2.4 16.9 4.8 17 9.2 Z" fill="#078207"/><path d="M5 0.9 L6.7 3.6 M13.8 0.9 L12.1 3.6" stroke="#078207" stroke-width="0.8" fill="none"/><circle cx="6.2" cy="6.5" r=".75" fill="#e4f2e8"/><circle cx="12.6" cy="6.5" r=".75" fill="#e4f2e8"/></svg><div class="c" style="left:775.5px">Android 13</div><div class="c" style="left:915px">master</div><svg class="abs" style="left:1071px;top:7px" width="12" height="13" viewBox="0 0 12 13"><path d="M6 12.9 V1.9 M1.2 6.6 L6 1.8 L10.8 6.6" fill="none" stroke="#2f9a3a" stroke-width="1.4"/></svg><div class="c" style="left:1089px">17.10.2023 08:56</div><div class="c" style="left:1274px">17.10.2023 06:23:07</div></div>
<div class="row" style="top:601px"><div class="cb"></div><svg class="abs" style="left:52px;top:7px" width="10" height="14" viewBox="0 0 10 14"><rect x="0.9" y="0.7" width="8.1" height="12.7" rx="1.1" fill="#c5c8f2"/><path d="M0.9 1.8 Q0.9 0.7 2 0.7 H7.9 Q9 0.7 9 1.8 V9.9 H0.9 Z" fill="#2a2fd1"/></svg><div class="c" style="left:68px">Pixel 4a</div><div class="c" style="left:242px">Pixel 4a</div><div class="c" style="left:427px">Google</div><div class="c" style="left:577.5px;letter-spacing:.34px"></div><svg class="abs" style="left:752px;top:8px" width="19" height="11" viewBox="0 0 19 11"><path d="M1.8 9.2 C1.9 4.8 5 2.4 9.4 2.4 C13.8 2.4 16.9 4.8 17 9.2 Z" fill="#078207"/><path d="M5 0.9 L6.7 3.6 M13.8 0.9 L12.1 3.6" stroke="#078207" stroke-width="0.8" fill="none"/><circle cx="6.2" cy="6.5" r=".75" fill="#e4f2e8"/><circle cx="12.6" cy="6.5" r=".75" fill="#e4f2e8"/></svg><div class="c" style="left:775.5px">Android 13</div><div class="c" style="left:915px">1.8.17</div><svg class="abs" style="left:1071px;top:7px" width="12" height="13" viewBox="0 0 12 13"><path d="M6 12.9 V1.9 M1.2 6.6 L6 1.8 L10.8 6.6" fill="none" stroke="#2f9a3a" stroke-width="1.4"/></svg><div class="c" style="left:1089px">18.10.2023 07:51</div><div class="c" style="left:1274px">17.10.2023 07:34:50</div></div>
<div class="row" style="top:632px"><div class="cb"></div><svg class="abs" style="left:52px;top:7px" width="10" height="14" viewBox="0 0 10 14"><rect x="0.9" y="0.7" width="8.1" height="12.7" rx="1.1" fill="#c5c8f2"/><path d="M0.9 1.8 Q0.9 0.7 2 0.7 H7.9 Q9 0.7 9 1.8 V9.9 H0.9 Z" fill="#2a2fd1"/></svg><div class="c" style="left:68px">Galaxy A10</div><div class="c" style="left:242px">SM-A105FN</div><div class="c" style="left:427px">samsung</div><div class="c" style="left:577.5px;letter-spacing:.34px">355460115822048</div><svg class="abs" style="left:752px;top:8px" width="19" height="11" viewBox="0 0 19 11"><path d="M1.8 9.2 C1.9 4.8 5 2.4 9.4 2.4 C13.8 2.4 16.9 4.8 17 9.2 Z" fill="#078207"/><path d="M5 0.9 L6.7 3.6 M13.8 0.9 L12.1 3.6" stroke="#078207" stroke-width="0.8" fill="none"/><circle cx="6.2" cy="6.5" r=".75" fill="#e4f2e8"/><circle cx="12.6" cy="6.5" r=".75" fill="#e4f2e8"/></svg><div class="c" style="left:775.5px">Android 11</div><div class="c" style="left:915px">1.8.16</div><svg class="abs" style="left:1071px;top:7px" width="12" height="13" viewBox="0 0 12 13"><path d="M6 12.9 V1.9 M1.2 6.6 L6 1.8 L10.8 6.6" fill="none" stroke="#2f9a3a" stroke-width="1.4"/></svg><div class="c" style="left:1089px">17.10.2023 11:41</div><div class="c" style="left:1274px">18.09.2023 05:42:28</div></div>
<div class="row" style="top:694px"><div class="cb"></div><svg class="abs" style="left:52px;top:7px" width="10" height="14" viewBox="0 0 10 14"><rect x="0.9" y="0.7" width="8.1" height="12.7" rx="1.1" fill="#c5c8f2"/><path d="M0.9 1.8 Q0.9 0.7 2 0.7 H7.9 Q9 0.7 9 1.8 V9.9 H0.9 Z" fill="#2a2fd1"/></svg><div class="c" style="left:68px">Pixel 4a</div><div class="c" style="left:242px">Pixel 4a</div><div class="c" style="left:427px">Google</div><div class="c" style="left:577.5px;letter-spacing:.34px">357480103545201</div><svg class="abs" style="left:752px;top:8px" width="19" height="11" viewBox="0 0 19 11"><path d="M1.8 9.2 C1.9 4.8 5 2.4 9.4 2.4 C13.8 2.4 16.9 4.8 17 9.2 Z" fill="#078207"/><path d="M5 0.9 L6.7 3.6 M13.8 0.9 L12.1 3.6" stroke="#078207" stroke-width="0.8" fill="none"/><circle cx="6.2" cy="6.5" r=".75" fill="#e4f2e8"/><circle cx="12.6" cy="6.5" r=".75" fill="#e4f2e8"/></svg><div class="c" style="left:775.5px">Android 13</div><div class="c" style="left:915px">1.8.18</div><svg class="abs" style="left:1071px;top:7px" width="12" height="13" viewBox="0 0 12 13"><path d="M6 12.9 V1.9 M1.2 6.6 L6 1.8 L10.8 6.6" fill="none" stroke="#2f9a3a" stroke-width="1.4"/></svg><div class="c" style="left:1089px">20.11.2023 09:41</div><div class="c" style="left:1274px">15.11.2023 09:51:40</div></div>
<div class="row" style="top:725px"><div class="cb"></div><svg class="abs" style="left:52px;top:7px" width="10" height="14" viewBox="0 0 10 14"><rect x="0.9" y="0.7" width="8.1" height="12.7" rx="1.1" fill="#c5c8f2"/><path d="M0.9 1.8 Q0.9 0.7 2 0.7 H7.9 Q9 0.7 9 1.8 V9.9 H0.9 Z" fill="#2a2fd1"/></svg><div class="c" style="left:68px">Galaxy A10</div><div class="c" style="left:242px">SM-A105FN</div><div class="c" style="left:427px">samsung</div><div class="c" style="left:577.5px;letter-spacing:.34px"></div><svg class="abs" style="left:752px;top:8px" width="19" height="11" viewBox="0 0 19 11"><path d="M1.8 9.2 C1.9 4.8 5 2.4 9.4 2.4 C13.8 2.4 16.9 4.8 17 9.2 Z" fill="#078207"/><path d="M5 0.9 L6.7 3.6 M13.8 0.9 L12.1 3.6" stroke="#078207" stroke-width="0.8" fill="none"/><circle cx="6.2" cy="6.5" r=".75" fill="#e4f2e8"/><circle cx="12.6" cy="6.5" r=".75" fill="#e4f2e8"/></svg><div class="c" style="left:775.5px">Android 11</div><div class="c" style="left:915px">1.8.16</div><svg class="abs" style="left:1071px;top:7px" width="12" height="13" viewBox="0 0 12 13"><path d="M6 12.9 V1.9 M1.2 6.6 L6 1.8 L10.8 6.6" fill="none" stroke="#2f9a3a" stroke-width="1.4"/></svg><div class="c" style="left:1089px">05.10.2023 13:35</div><div class="c" style="left:1274px">18.09.2023 10:29:28</div></div>
<svg class="abs" style="left:310px;top:646px;overflow:visible" width="1550" height="64" viewBox="310 646 1550 64"><defs><filter id="gs" x="-2%" y="-50%" width="104%" height="200%"><feGaussianBlur stdDeviation="2.4"/></filter><linearGradient id="it" x1="0" y1="0" x2="0" y2="1"><stop offset="0" stop-color="#0a1090" stop-opacity=".6"/><stop offset="1" stop-color="#0a1090" stop-opacity="0"/></linearGradient><linearGradient id="il" x1="0" y1="0" x2="1" y2="0"><stop offset="0" stop-color="#0a1090" stop-opacity=".55"/><stop offset="1" stop-color="#0a1090" stop-opacity="0"/></linearGradient></defs><rect x="319.5" y="657" width="1532" height="42.5" rx="7" fill="#000" opacity=".36" filter="url(#gs)"/><rect x="323" y="660.5" width="1525" height="34" fill="#cbcbd2"/><rect x="323.7" y="663" width="1523.8" height="29.8" fill="#2a38d3"/><rect x="323.7" y="663" width="1523.8" height="4.5" fill="url(#it)"/><rect x="323.7" y="663" width="5" height="29.8" fill="url(#il)"/><rect x="321.7" y="658.8" width="1527.4" height="37.4" rx="5.5" fill="none" stroke="#92d540" stroke-width="4.3"/></svg>
<div class="row" style="top:663px;border-bottom:none;font-weight:700"><div class="cb" style="border-color:#e8e8ff;background:#2a38d3"><svg style="position:absolute;left:1px;top:1.5px" width="9" height="8" viewBox="0 0 9 8"><path d="M1.6 4.2 L3.7 6.3 L7.6 1.8" fill="none" stroke="#fff" stroke-width="1.7"/></svg></div><svg class="abs" style="left:52px;top:7px" width="10" height="14" viewBox="0 0 10 14"><rect x="0.9" y="0.7" width="8.1" height="12.7" rx="1.1" fill="#c5c8f2"/><path d="M0.9 1.8 Q0.9 0.7 2 0.7 H7.9 Q9 0.7 9 1.8 V9.9 H0.9 Z" fill="#ffffff"/></svg><div class="c" style="left:68px;color:#fff;font-weight:700;letter-spacing:-0.25px">Galaxy A13</div><div class="c" style="left:242px;color:#fff;font-weight:700;letter-spacing:-0.05px">SM-A135F</div><div class="c" style="left:427px;color:#fff;font-weight:700;letter-spacing:-0.32px">samsung</div><div class="c" style="left:577.5px;color:#fff;font-weight:700;letter-spacing:0.34px">356002720127758</div><div class="c" style="left:775.5px;color:#fff;font-weight:700;letter-spacing:-0.42px">Android 12</div><div class="c" style="left:915px;color:#fff;font-weight:700;letter-spacing:0px">1.8.17</div><div class="c" style="left:1089px;color:#fff;font-weight:700;letter-spacing:-0.05px">13.11.2023 08:31</div><div class="c" style="left:1274px;color:#fff;font-weight:700;letter-spacing:-0.05px">25.10.2023 06:54:16</div><svg class="abs" style="left:752px;top:8px" width="19" height="11" viewBox="0 0 19 11"><path d="M1.8 9.2 C1.9 4.8 5 2.4 9.4 2.4 C13.8 2.4 16.9 4.8 17 9.2 Z" fill="#078207"/><path d="M5 0.9 L6.7 3.6 M13.8 0.9 L12.1 3.6" stroke="#078207" stroke-width="0.8" fill="none"/><circle cx="6.2" cy="6.5" r=".75" fill="#2b50c0"/><circle cx="12.6" cy="6.5" r=".75" fill="#2b50c0"/></svg><svg class="abs" style="left:1071px;top:7px" width="12" height="13" viewBox="0 0 12 13"><path d="M6 12.9 V1.9 M1.2 6.6 L6 1.8 L10.8 6.6" fill="none" stroke="#2c8a4a" stroke-width="1.4"/></svg></div>
<svg class="abs" style="left:338px;top:774px" width="9" height="9" viewBox="0 0 9 9"><path d="M1 0.5 V8.5" stroke="#55555c" stroke-width="1.4"/><path d="M8.6 0.6 V8.4 L2.6 4.5 Z" fill="#55555c"/></svg>
<svg class="abs" style="left:369px;top:774px" width="8" height="9" viewBox="0 0 8 9"><path d="M7 0.6 V8.4 L1 4.5 Z" fill="#55555c"/></svg>
<div class="abs" style="left:389px;top:763px;width:31px;height:31px;background:#d2d5f5"></div>
<div class="t" style="left:389px;top:770px;width:31px;text-align:center;font-family:'Liberation Serif',serif;font-size:14px;color:#2a2fd1">1</div>
<svg class="abs" style="left:432px;top:774px" width="8" height="9" viewBox="0 0 8 9"><path d="M1 0.6 V8.4 L7 4.5 Z" fill="#55555c"/></svg>
<svg class="abs" style="left:461px;top:774px" width="9" height="9" viewBox="0 0 9 9"><path d="M8 0.5 V8.5" stroke="#55555c" stroke-width="1.4"/><path d="M0.4 0.6 V8.4 L6.4 4.5 Z" fill="#55555c"/></svg>
<div class="t" style="left:495px;top:770px;font-size:13.15px;color:#24262b">Strona</div>
<div class="abs" style="left:540px;top:763px;width:65px;height:31px;border:1px solid #e4e8fa;border-radius:5px"></div>
<div class="t" style="left:552px;top:770px;font-size:13px;color:#24262b">1</div>
<div class="t" style="left:612px;top:770px;font-size:13.15px;color:#24262b">z 1</div>
<div class="abs" style="left:642px;top:763px;width:65px;height:31px;border:1px solid #e4e8fa;border-radius:5px"></div>
<div class="abs" style="left:679px;top:763px;width:28px;height:31px;background:#e8ecfd;border-radius:0 5px 5px 0"></div>
<div class="t" style="left:653px;top:770px;font-size:13px;color:#24262b">20</div>
<svg class="abs" style="left:688px;top:775px" width="9" height="7" viewBox="0 0 9 7"><path d="M0.3 0.5 H8.7 L4.5 6.5 Z" fill="#2a2fd1"/></svg>
<div class="t" style="left:714px;top:770px;font-size:13.15px;color:#24262b">na stronę</div>
<div class="t" style="left:1642px;top:770px;font-size:13.15px;color:#24262b">Wyświetlanie elementów 1 - 12 z 12</div>
<svg class="abs" style="left:1871px;top:771px" width="15" height="16" viewBox="0 0 15 16"><path d="M7.5 3.4 A5.6 5.6 0 1 0 13.1 9" fill="none" stroke="#222" stroke-width="1.5"/><path d="M6.6 0.4 L10.4 3.4 L6.6 6.4 Z" fill="#222"/></svg>
<div class="abs" style="left:339px;top:141px;width:199px;height:443px;background:#fff;border-radius:4px 4px 3px 3px;box-shadow:0 3px 7px rgba(0,0,20,.13),0 0 0 1px rgba(60,70,120,.07)"></div>
<div class="abs" style="left:338.5px;top:141px;width:199.5px;height:27px;border:3px solid #dfe2e1;border-top-width:4px;background:#fff;border-radius:4px 4px 0 0"></div>
<div class="dd" style="top:147px">Zdalne czyszczenie</div>
<div class="dd" style="top:173px">Zrzut ekranu</div>
<div class="dd" style="top:199px">Pobierz logi</div>
<div class="dd" style="top:225px">Wyślij powiadomienie</div>
<div class="dd" style="top:251px">Skanuj pliki</div>
<div class="dd" style="top:277px">Kopia zapasowa</div>
<div class="dd" style="top:303px">Odtwórz kopię zapasową</div>
<div class="dd" style="top:329px">Przypisz politykę</div>
<div class="dd" style="top:355px">Przypisz profil</div>
<div class="dd" style="top:381px">Przypisz osobę</div>
<div class="dd" style="top:407px">Dezaktywacja</div>
<div class="dd" style="top:433px">Reset hasła</div>
<div class="dd" style="top:459px">Zainstaluj aplikację</div>
<div class="dd" style="top:485px">Uruchom ponownie</div>
<div class="dd" style="top:511px">Zablokuj</div>
<div class="dd" style="top:537px">Odblokuj</div>
<div class="dd" style="top:563px">Check for agent update</div>
<div class="abs" style="left:335px;top:105px;width:66px;height:39px;border:4.4px solid #92d540;border-radius:8px;box-shadow:1px 2px 5px rgba(0,0,0,.28)"></div>
</body></html>
